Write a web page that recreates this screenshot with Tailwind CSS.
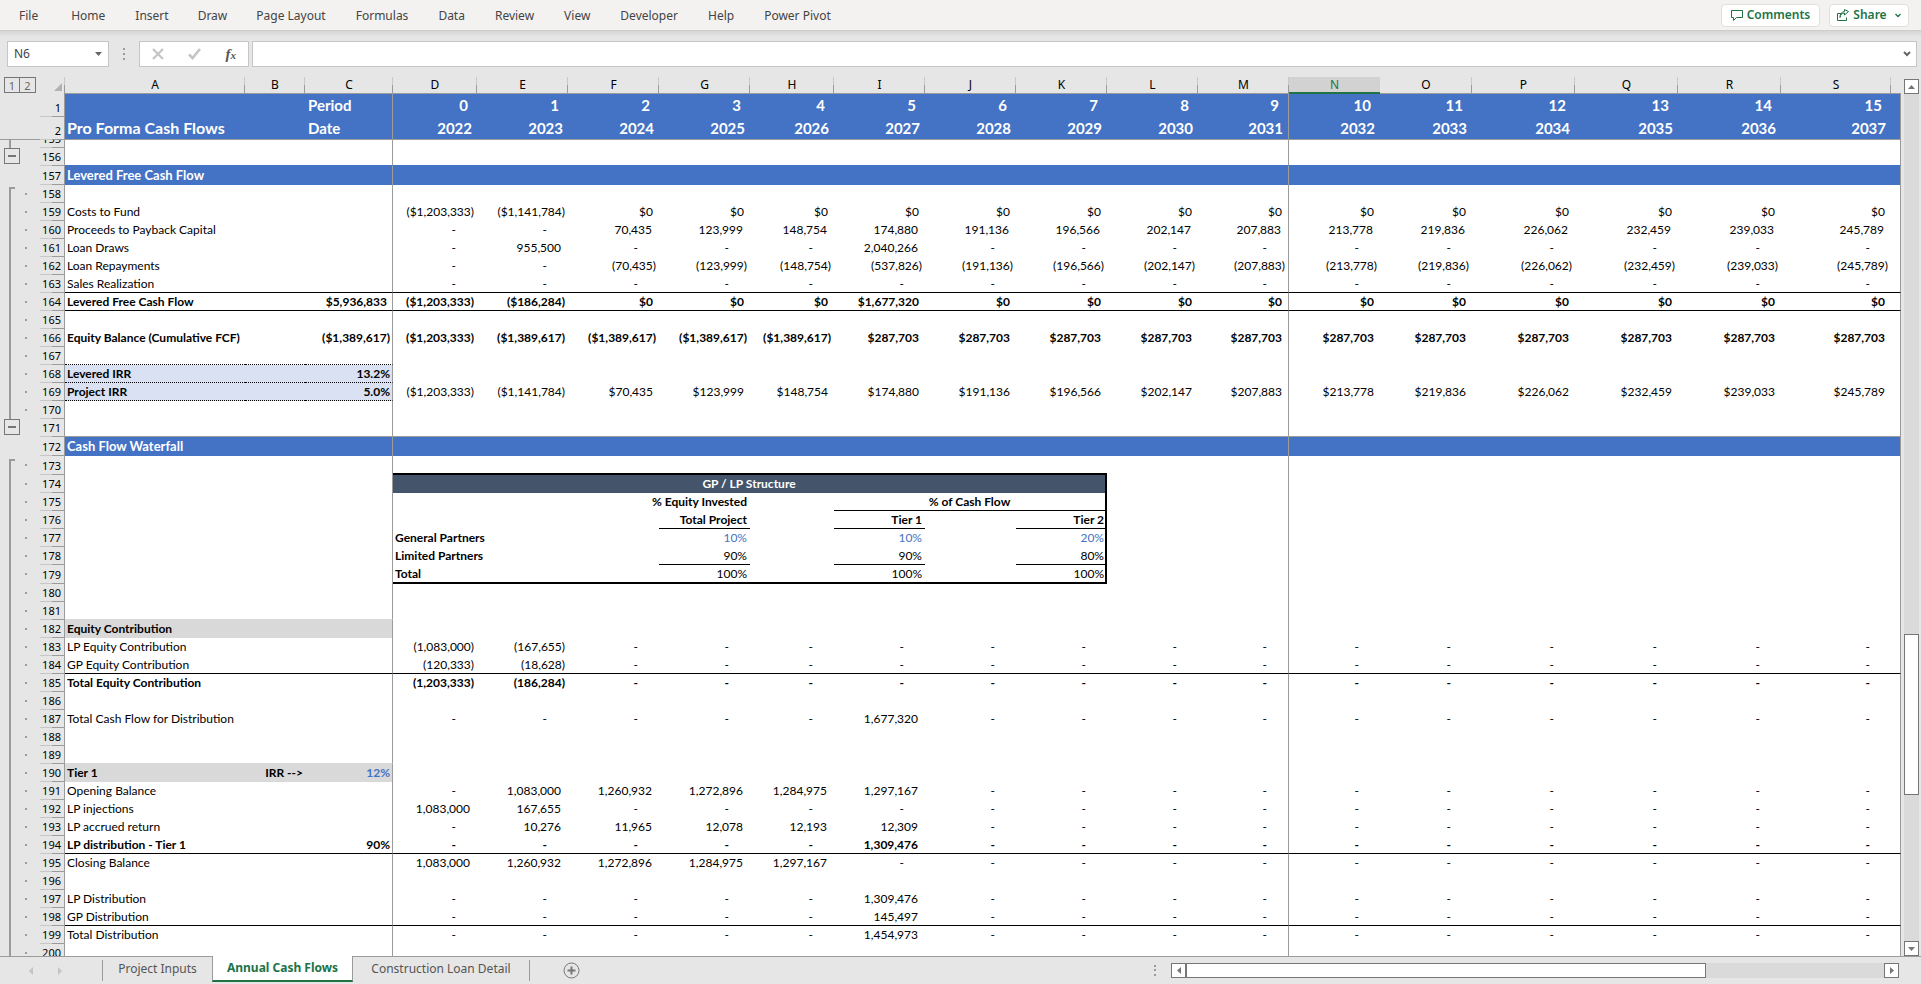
<!DOCTYPE html>
<html lang="en">
<head>
<meta charset="utf-8">
<title>Annual Cash Flows</title>
<script src="https://cdn.jsdelivr.net/npm/@tailwindcss/browser@4"></script>
</head>
<body class="h-screen flex flex-col overflow-hidden bg-[#e6e6e6] font-[Lato,Carlito,sans-serif] text-[12px] text-black">

<header class="h-[30px] shrink-0 flex items-center justify-between bg-[#f3f2f1] pr-3 font-['Noto_Sans',sans-serif] text-[#444]">
  <nav class="flex items-center pt-px pl-1 leading-[20px]" aria-label="Ribbon">
    <button class="pl-[15px] pr-[18px]">File</button>
    <button class="px-[15px]">Home</button>
    <button class="px-[15px]">Insert</button>
    <button class="px-[14px]">Draw</button>
    <button class="px-[15px]">Page Layout</button>
    <button class="px-[15px]">Formulas</button>
    <button class="px-[15px]">Data</button>
    <button class="px-[15px]">Review</button>
    <button class="px-[15px]">View</button>
    <button class="px-[15px]">Developer</button>
    <button class="px-[15px]">Help</button>
    <button class="px-[15px]">Power Pivot</button>
  </nav>
  <div class="flex gap-[9px] font-semibold text-[#217346]">
    <button class="flex h-[23px] w-[99px] items-center justify-center gap-1 rounded-sm border border-[#e1dfdd] bg-white">
      <svg class="size-3" viewBox="0 0 12 12" fill="none" stroke="#217346"><path d="M.5 1.5h11v7h-6l-3 3v-3h-2z"/></svg>Comments
    </button>
    <button class="flex h-[23px] w-[80px] items-center justify-center gap-1 rounded-sm border border-[#e1dfdd] bg-white">
      <svg class="size-3" viewBox="0 0 12 12" fill="none" stroke="#217346"><path d="M4.5 4.5h-4v7h9v-3M3 8.5c.5-3 2-4.500 4.500-4.500V6l4-3.500-4-2v2C4.500 3 3 5 3 8.500z"/></svg>Share
      <svg class="ml-1 h-[5px] w-[6px]" viewBox="0 0 6 5" fill="none" stroke="#217346" stroke-width="1.300"><path d="M.5 1l2.500 2.500L5.500 1"/></svg>
    </button>
  </div>
</header>

<section class="h-[47px] shrink-0 flex items-start border-t border-[#cfcdcb] bg-[linear-gradient(#d6d6d6,#e6e6e6_6px)] pt-[10px] pl-[7px] pr-1 font-['Noto_Sans',sans-serif]" aria-label="Formula bar">
  <div class="flex h-[26px] w-[102px] items-center border border-[#c6c6c6] bg-white">
    <input class="w-full min-w-0 flex-1 pl-[6px] text-[#444] outline-none" aria-label="Name box" value="N6">
    <button class="px-[6px]" aria-label="Open name list"><svg class="h-[4px] w-[7px]" viewBox="0 0 7 4"><path d="M0 0h7L3.500 4z" fill="#666"/></svg></button>
  </div>
  <svg class="mx-[14px] mt-[6px] h-[13px] w-[2px]" viewBox="0 0 2 13" fill="#9b9b9b"><path d="M0 1h2v2H0zM0 6h2v2H0zM0 11h2v2H0z"/></svg>
  <div class="flex h-[26px] w-[110px] items-center justify-between border border-[#c6c6c6] bg-white px-3">
    <button aria-label="Cancel"><svg class="size-3" viewBox="0 0 12 12" stroke="#c4c4c4" stroke-width="2.200"><path d="M1 1l10 10M11 1L1 11"/></svg></button>
    <button aria-label="Enter"><svg class="h-3 w-[13px]" viewBox="0 0 13 12" fill="none" stroke="#c4c4c4" stroke-width="2.600"><path d="M1 6.500l3.500 3.500L12 1"/></svg></button>
    <button class="font-['Liberation_Serif',serif] text-[15px] leading-[18px] font-bold italic text-[#555]" aria-label="Insert function">f<span class="text-[11px]">x</span></button>
  </div>
  <div class="ml-[3px] flex h-[26px] flex-1 items-center border border-[#c6c6c6] bg-white">
    <input class="min-w-0 flex-1 px-2 outline-none" aria-label="Formula">
    <button class="px-[5px]" aria-label="Expand formula bar"><svg class="h-[6px] w-[8px]" viewBox="0 0 8 6" fill="none" stroke="#666" stroke-width="2"><path d="M1 1l3 3 3-3"/></svg></button>
  </div>
</section>

<main class="flex min-h-0 flex-1">
  <div class="min-w-0 flex-1 overflow-hidden">
    <table class="w-full table-fixed border-separate border-spacing-0">
      <colgroup>
        <col class="w-[40px]"><col class="w-[25px]">
        <col class="w-[180px]"><col class="w-[60px]"><col class="w-[88px]">
        <col class="w-[84px]"><col class="w-[91px]"><col class="w-[91px]"><col class="w-[91px]"><col class="w-[84px]">
        <col class="w-[91px]"><col class="w-[91px]"><col class="w-[91px]"><col class="w-[91px]"><col class="w-[91px]"><col class="w-[91px]"><col class="w-[92px]">
        <col class="w-[103px]"><col class="w-[103px]"><col class="w-[103px]"><col class="w-[110px]"><col>
      </colgroup>
      <thead id="head"></thead>
      <tbody id="body"></tbody>
    </table>
  </div>
  <div class="flex w-5 shrink-0 flex-col pt-[2px] pl-[3px] pr-[2px]">
    <button class="flex h-[15px] items-center justify-center border border-[#767676] bg-white" aria-label="Scroll up"><svg class="h-1 w-[7px]" viewBox="0 0 7 4"><path d="M0 4h7L3.500 0z" fill="#767676"/></svg></button>
    <div class="flex flex-1 flex-col bg-[#dadada]">
      <div class="grow-[541]"></div>
      <div class="grow-[160] border border-[#767676] bg-white"></div>
      <div class="grow-[146]"></div>
    </div>
    <button class="flex h-[15px] items-center justify-center border border-[#767676] bg-white" aria-label="Scroll down"><svg class="h-1 w-[7px]" viewBox="0 0 7 4"><path d="M0 0h7L3.500 4z" fill="#767676"/></svg></button>
  </div>
</main>

<footer class="flex h-[28px] shrink-0 font-['Noto_Sans',sans-serif] text-[#555]">
  <nav class="flex flex-1 border-t border-[#9b9b9b]" aria-label="Sheets">
    <div class="flex w-[102px] items-center gap-[25px] pl-[29px]">
      <button aria-label="Previous sheet"><svg class="h-[8px] w-[4px]" viewBox="0 0 4 8"><path d="M4 0v8L0 4z" fill="#c4c4c4"/></svg></button>
      <button aria-label="Next sheet"><svg class="h-[8px] w-[4px]" viewBox="0 0 4 8"><path d="M0 0v8l4-4z" fill="#c4c4c4"/></svg></button>
    </div>
    <button class="my-[3px] w-[110px] border-l border-[#9b9b9b] pb-[3px] leading-[18px]">Project Inputs</button>
    <button class="-mt-px mb-[2px] w-[141px] border-x border-b-2 border-x-[#9b9b9b] border-b-[#217346] bg-white font-bold text-[#217346]">Annual Cash Flows</button>
    <button class="my-[3px] w-[177px] border-r border-[#9b9b9b] pb-[3px] leading-[18px]">Construction Loan Detail</button>
    <button class="ml-[33px]" aria-label="New sheet"><svg class="size-[17px]" viewBox="0 0 17 17" fill="none" stroke="#767676"><circle cx="8.500" cy="8.500" r="7.500"/><path d="M8.500 4.500v8M4.500 8.500h8" stroke-width="2"/></svg></button>
  </nav>
  <div class="flex w-[767px] items-center border-t border-[#9b9b9b] pr-[22px]">
    <svg class="mr-[15px] h-[11px] w-[2px]" viewBox="0 0 2 11" fill="#9b9b9b"><path d="M0 0h2v2H0zM0 4h2v2H0zM0 9h2v2H0z"/></svg>
    <button class="flex size-[15px] items-center justify-center border border-[#767676] bg-white" aria-label="Scroll left"><svg class="h-[7px] w-1" viewBox="0 0 4 7"><path d="M4 0v7L0 3.500z" fill="#767676"/></svg></button>
    <div class="flex h-[15px] flex-1 bg-[#dadada]">
      <div class="grow-[519] border border-[#767676] bg-white"></div>
      <div class="grow-[179]"></div>
    </div>
    <button class="flex size-[15px] items-center justify-center border border-[#767676] bg-white" aria-label="Scroll right"><svg class="h-[7px] w-1" viewBox="0 0 4 7"><path d="M0 0v7l4-3.500z" fill="#767676"/></svg></button>
  </div>
</footer>

<script>
const LETTERS = 'ABCDEFGHIJKLMNOPQRS'.split('').concat('T');
const d = n => Array(n).fill('-');
const cells = s => s.split(' ');
const ZERO10 = Array(10).fill('$0');
const EQ10 = Array(10).fill('$287,703');
const growth = ['191,136','196,566','202,147','207,883','213,778','219,836','226,062','232,459','239,033','245,789'];
const paren = a => a.map(v => '(' + v + ')');
const usd = a => a.map(v => '$' + v);

// v holds columns D to S; a, b and c hold the label columns.
const ROWS = {
  159: {a:'Costs to Fund', v:['($1,203,333)','($1,141,784)','$0','$0','$0','$0',...ZERO10]},
  160: {a:'Proceeds to Payback Capital', v:['-','-','70,435','123,999','148,754','174,880',...growth]},
  161: {a:'Loan Draws', v:['-','955,500','-','-','-','2,040,266',...d(10)]},
  162: {a:'Loan Repayments', v:['-','-','(70,435)','(123,999)','(148,754)','(537,826)',...paren(growth)]},
  163: {a:'Sales Realization', v:d(16), line:'black'},
  164: {a:'Levered Free Cash Flow', c:'$5,936,833', bold:1, v:['($1,203,333)','($186,284)','$0','$0','$0','$1,677,320',...ZERO10], line:'black'},
  166: {a:'Equity Balance (Cumulative FCF)', c:'($1,389,617)', bold:1, v:['($1,203,333)','($1,389,617)','($1,389,617)','($1,389,617)','($1,389,617)','$287,703',...EQ10]},
  167: {line:'dots'},
  168: {a:'Levered IRR', c:'13.2%', boldLabel:1, fill:'bg-[#d9e1f2]', line:'dots'},
  169: {a:'Project IRR', c:'5.0%', boldLabel:1, fill:'bg-[#d9e1f2]', line:'dots', v:['($1,203,333)','($1,141,784)','$70,435','$123,999','$148,754','$174,880',...usd(growth)]},
  156: {line:'blue'}, 157: {a:'Levered Free Cash Flow', band:1, h:19},
  171: {line:'grey'}, 172: {a:'Cash Flow Waterfall', band:1, h:19},
  173: {h:19, box:'top'}, 174: {box:1}, 175: {box:1}, 176: {box:1}, 177: {box:1}, 178: {box:1}, 179: {box:1, h:19},
  181: {line:'silver'},
  182: {a:'Equity Contribution', boldLabel:1, fill:'bg-[#d9d9d9]'},
  183: {a:'LP Equity Contribution', v:['(1,083,000)','(167,655)',...d(14)]},
  184: {a:'GP Equity Contribution', v:['(120,333)','(18,628)',...d(14)], line:'black'},
  185: {a:'Total Equity Contribution', bold:1, v:['(1,203,333)','(186,284)',...d(14)]},
  187: {a:'Total Cash Flow for Distribution', v:[...d(5),'1,677,320',...d(10)]},
  189: {line:'silver'},
  190: {a:'Tier 1', b:'IRR -->', c:'12%', boldLabel:1, blueC:1, fill:'bg-[#d9d9d9]'},
  191: {a:'Opening Balance', v:[...cells('- 1,083,000 1,260,932 1,272,896 1,284,975 1,297,167'),...d(10)]},
  192: {a:'LP injections', v:['1,083,000','167,655',...d(14)]},
  193: {a:'LP accrued return', v:[...cells('- 10,276 11,965 12,078 12,193 12,309'),...d(10)]},
  194: {a:'LP distribution - Tier 1', c:'90%', bold:1, v:[...d(5),'1,309,476',...d(10)], line:'black'},
  195: {a:'Closing Balance', v:[...cells('1,083,000 1,260,932 1,272,896 1,284,975 1,297,167'),...d(11)]},
  197: {a:'LP Distribution', v:[...d(5),'1,309,476',...d(10)]},
  198: {a:'GP Distribution', v:[...d(5),'145,497',...d(10)], line:'black'},
  199: {a:'Total Distribution', v:[...d(5),'1,454,973',...d(10)]},
};

// Cells D to K of the GP / LP structure box: [span, text, classes].
const RULE = 'border-b border-b-black ', NONE = 'pb-px ', END = 'border-r-2 border-r-black ', BASE = 'border-b-2 border-b-black ';
const R = 'text-right pr-[3px] ', INPUT = 'text-[#4472c4] ', B = 'font-bold ';
const BOX = {
  174: [[8,'GP / LP Structure',NONE+END+'bg-[#44546a] text-white text-center font-bold']],
  175: [[2,'',NONE],[2,'% Equity Invested',NONE+R+B],[1,'',NONE],[3,'% of Cash Flow',RULE+END+'text-center font-bold']],
  176: [[3,'',NONE],[1,'Total Project',RULE+R+B],[1,'',NONE],[1,'Tier 1',RULE+R+B],[1,'',NONE],[1,'Tier 2',RULE+END+'text-right pr-px font-bold']],
  177: [[3,'General Partners',NONE+B+'pl-[2px]'],[1,'10%',NONE+R+INPUT],[1,'',NONE],[1,'10%',NONE+R+INPUT],[1,'',NONE],[1,'20%',NONE+END+INPUT+'text-right pr-px']],
  178: [[3,'Limited Partners',NONE+B+'pl-[2px]'],[1,'90%',RULE+R],[1,'',NONE],[1,'90%',RULE+R],[1,'',NONE],[1,'80%',RULE+END+'text-right pr-px']],
  179: [[3,'Total',BASE+B+'pl-[2px]'],[1,'100%',BASE+R],[1,'',BASE],[1,'100%',BASE+R],[1,'',BASE],[1,'100%',BASE+END+'text-right pr-px']],
};

const LINE = {
  none: 'pb-px', black: 'border-b border-b-black', blue: 'border-b border-b-[#4472c4]',
  grey: 'border-b border-b-[#9b9b9b]', silver: 'border-b border-b-[#d9d9d9]', dots: 'border-b border-b-black border-dotted',
};
const HEIGHT = {8:'h-[8px]', 18:'h-[18px]', 19:'h-[19px]', 23:'h-[23px]'};

function padOf(t) {
  if (t === '-') return 'pr-[21px]';
  if (t[0] === '(' || t.endsWith('%')) return 'pr-[3px]';
  if (t[0] === '$') return 'pr-[6px]';
  return 'pr-[7px]';
}
function edge(i) {
  if (i === 2) return ' border-r border-r-[#9b9b9b] [border-right-style:solid]';
  if (i === 12 || i === 19) return ' border-r border-r-[#9b9b9b]';
  return '';
}
function td(text, cls, span) {
  return `<td${span > 1 ? ` colspan="${span}"` : ''} class="p-0 leading-[17px] whitespace-nowrap ${cls}">${text.replace('>', '&gt;')}</td>`;
}

const MINUS = '<button class="ml-1 flex size-4 items-center justify-center border border-[#767676]" aria-label="Collapse group"><span class="h-[2px] w-2 bg-[#767676]"></span></button>';
function gutter(n, h) {
  let inside = '';
  if (n === 155) inside = '<span class="ml-[9px] h-full border-l-2 border-[#9b9b9b]"></span>';
  else if (n === 156 || n === 171) inside = MINUS;
  else if (n === 158 || n === 173) inside = '<span class="ml-[9px] h-[16px] w-[6px] self-end border-l-2 border-t-2 border-[#9b9b9b]"></span><span class="ml-[10px] mt-2 size-[2px] bg-[#9b9b9b]"></span>';
  else if (n > 158 && n !== 172) inside = '<span class="ml-[9px] h-full w-[6px] border-l-2 border-[#9b9b9b]"></span><span class="ml-[10px] mt-2 size-[2px] bg-[#9b9b9b]"></span>';
  return `<td class="p-0"><div class="flex items-start ${HEIGHT[h]}">${inside}</div></td>`;
}
function rowHead(n, h) {
  return `<th scope="row" class="p-0 font-normal"><div class="flex items-end justify-end overflow-hidden border-r border-[#9b9b9b] bg-[linear-gradient(to_right,#c8c8c8_50%,#9b9b9b_50%)] bg-[length:100%_1px] bg-bottom bg-no-repeat pr-[3px] font-['Noto_Sans',sans-serif] text-[11px] leading-[18px] ${HEIGHT[h]}">${n}</div></th>`;
}

function headerRow(n, label, values) {
  const base = 'bg-[#4472c4] text-white font-bold text-[15px] align-bottom !leading-[20px] ' + (n === 2 ? 'pb-px border-b border-b-[#9b9b9b] ' : 'pb-[2px] ');
  let h = `<tr class="h-[23px]">` + (n === 2 ? '<td class="p-0 border-b border-[#9b9b9b]"></td>' : '<td class="p-0"></td>') + rowHead(n, 23);
  h += td(n === 2 ? 'Pro Forma Cash Flows' : '', base + 'pl-[2px] !text-[16px]') + td('', base) + td(label, base + 'pl-[3px]' + edge(2));
  values.forEach((v, i) => { h += td(String(v), base + 'text-right ' + (n === 1 ? 'pr-[9px]' : 'pr-[5px]') + edge(i + 3)); });
  return h + td('', base + edge(19)) + '</tr>';
}

function bodyRow(n) {
  const r = ROWS[n] || {};
  const h = n === 155 ? 8 : (r.h || 18);
  const band = r.band ? ' bg-[#4472c4] text-white font-bold text-[13px]' : '';
  const line = LINE[r.line || 'none'];
  const leftOnly = r.line === 'dots' || r.line === 'silver';
  const rightLine = leftOnly ? LINE.none : line;
  const bg = band || (r.fill ? ' ' + r.fill : ' bg-white');
  const bl = r.bold || r.boldLabel ? ' font-bold' : '';
  let s = `<tr class="${HEIGHT[h]}">` + gutter(n, h) + rowHead(n, h);
  s += td(r.a || '', line + bg + bl + ' pl-[2px]') + td(r.b || '', line + bg + bl + ' text-right pr-[2px]');
  s += td(r.c || '', line + bg + bl + ' text-right ' + (r.c && r.c[0] === '$' ? 'pr-[5px]' : 'pr-[2px]') + (r.blueC ? ' text-[#4472c4]' : '') + edge(2));
  let i = 3;
  if (BOX[n]) {
    BOX[n].forEach(([span, t, cls]) => { s += td(t, (cls.includes('bg-') ? '' : 'bg-white ') + cls, span); });
    i = 11;
  }
  for (; i < 20; i++) {
    const t = (r.v && r.v[i - 3]) || '';
    const ln = r.box === 'top' && i < 11 ? 'border-b-2 border-b-black' : rightLine;
    s += td(t, ln + (band || ' bg-white') + (r.bold ? ' font-bold' : '') + ' text-right ' + padOf(t) + edge(i));
  }
  return s + '</tr>';
}

const TICK = 'bg-[linear-gradient(#c8c8c8_50%,#9b9b9b_50%)] bg-[length:1px_100%] bg-right bg-no-repeat';
let head = '<tr class="h-[17px]"><td class="p-0"><div class="flex h-[17px] items-start pl-1 font-[\'Noto_Sans\',sans-serif] text-[11px] leading-[15px] text-[#666]"><button class="h-4 w-4 border border-[#767676]">1</button><button class="h-4 w-4 border border-l-0 border-[#767676]">2</button></div></td>';
head += `<td class="p-0"><div class="flex h-[17px] items-end justify-end pb-[3px] pr-[3px] ${TICK}"><svg class="size-2" viewBox="0 0 8 8"><path d="M8 0v8H0z" fill="#b2b2b2"/></svg></div></td>`;
LETTERS.forEach((l, i) => {
  const sel = l === 'N';
  head += `<th scope="col" class="p-0 font-normal leading-[15px] align-top font-['Noto_Sans',sans-serif] ${sel ? 'bg-[#d2d2d2] text-[#217346] border-b-2 border-[#217346]' : 'border-b border-[#9b9b9b] ' + (i < 19 ? TICK : '')}">${l === 'T' ? '' : l}</th>`;
});
head += '</tr>' + headerRow(1, 'Period', [...Array(16).keys()]) + headerRow(2, 'Date', [...Array(16).keys()].map(y => 2022 + y));
document.getElementById('head').innerHTML = head;

let body = '';
for (let n = 155; n <= 200; n++) body += bodyRow(n);
document.getElementById('body').innerHTML = body;
</script>
</body>
</html>
